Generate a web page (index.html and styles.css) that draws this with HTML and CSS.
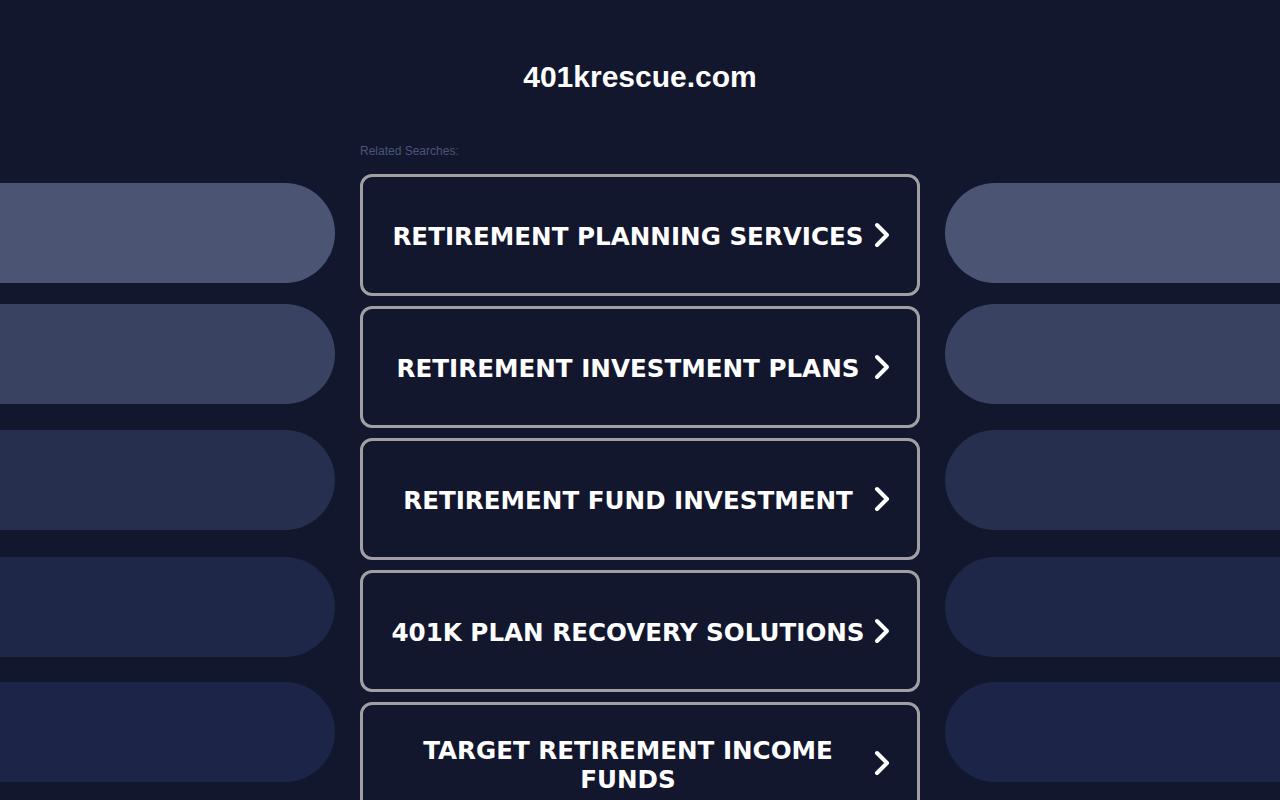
FILE: index.html
```html
<!DOCTYPE html>
<html lang="en">
<head>
<meta charset="utf-8">
<title>401krescue.com</title>
<link rel="stylesheet" href="styles.css">
</head>
<body>
<header class="header">
  <h1 class="title">401krescue.com</h1>
</header>
<main class="main">
  <aside class="side side-left">
    <div class="pill p1"></div>
    <div class="pill p2"></div>
    <div class="pill p3"></div>
    <div class="pill p4"></div>
    <div class="pill p5"></div>
  </aside>
  <section class="center">
    <div class="label">Related Searches:</div>
    <a class="btn" href="#"><span class="btn-text">RETIREMENT PLANNING SERVICES</span><svg class="chev" viewBox="0 0 24 30" width="24" height="30"><polyline points="4,5 14,15 4,25"/></svg></a>
    <a class="btn" href="#"><span class="btn-text">RETIREMENT INVESTMENT PLANS</span><svg class="chev" viewBox="0 0 24 30" width="24" height="30"><polyline points="4,5 14,15 4,25"/></svg></a>
    <a class="btn" href="#"><span class="btn-text">RETIREMENT FUND INVESTMENT</span><svg class="chev" viewBox="0 0 24 30" width="24" height="30"><polyline points="4,5 14,15 4,25"/></svg></a>
    <a class="btn" href="#"><span class="btn-text">401K PLAN RECOVERY SOLUTIONS</span><svg class="chev" viewBox="0 0 24 30" width="24" height="30"><polyline points="4,5 14,15 4,25"/></svg></a>
    <a class="btn" href="#"><span class="btn-text">TARGET RETIREMENT INCOME FUNDS</span><svg class="chev" viewBox="0 0 24 30" width="24" height="30"><polyline points="4,5 14,15 4,25"/></svg></a>
  </section>
  <aside class="side side-right">
    <div class="pill p1"></div>
    <div class="pill p2"></div>
    <div class="pill p3"></div>
    <div class="pill p4"></div>
    <div class="pill p5"></div>
  </aside>
</main>
</body>
</html>
```
FILE: styles.css
```css
html, body {
  margin: 0;
  padding: 0;
  background: #12172e;
  height: 100%;
  overflow: hidden;
}
body {
  font-family: "Liberation Sans", Arial, sans-serif;
  color: #fff;
}
.header {
  height: 143px;
  box-sizing: border-box;
  padding-top: 60px;
  text-align: center;
}
.title {
  margin: 0;
  font-size: 30px;
  line-height: 34px;
  font-weight: bold;
  color: #fff;
}
.main {
  display: grid;
  grid-template-columns: 335px 560px 335px;
  column-gap: 25px;
}
.side {
  display: flex;
  flex-direction: column;
  padding-top: 40px;
}
.pill {
  height: 100px;
  flex: none;
}
.side-left .pill { border-radius: 0 50px 50px 0; }
.side-right .pill { border-radius: 50px 0 0 50px; }
.p1 { background: #4b5472; }
.p2 { background: #3a4262; margin-top: 21px; }
.p3 { background: #272f4f; margin-top: 26px; }
.p4 { background: #1e2748; margin-top: 27px; }
.p5 { background: #1c2547; margin-top: 25px; }
.center {
  display: flex;
  flex-direction: column;
  gap: 10px;
}
.label {
  font-size: 12px;
  line-height: 14px;
  color: #4b5579;
  margin-top: 1px;
  margin-bottom: 6px;
}
.btn {
  display: flex;
  align-items: center;
  height: 122px;
  box-sizing: border-box;
  border: 3px solid #a0a0a2;
  border-radius: 12px;
  padding: 0 20px;
  text-decoration: none;
  color: #fff;
  flex: none;
}
.btn-text {
  flex: 1;
  text-align: center;
  font-family: "DejaVu Sans", Verdana, sans-serif;
  font-weight: bold;
  font-size: 24.6px;
  line-height: 29px;
  padding-top: 3px;
}
.chev {
  flex: none;
  fill: none;
  stroke: #fff;
  stroke-width: 4;
  stroke-linecap: round;
  stroke-linejoin: round;
}
```
